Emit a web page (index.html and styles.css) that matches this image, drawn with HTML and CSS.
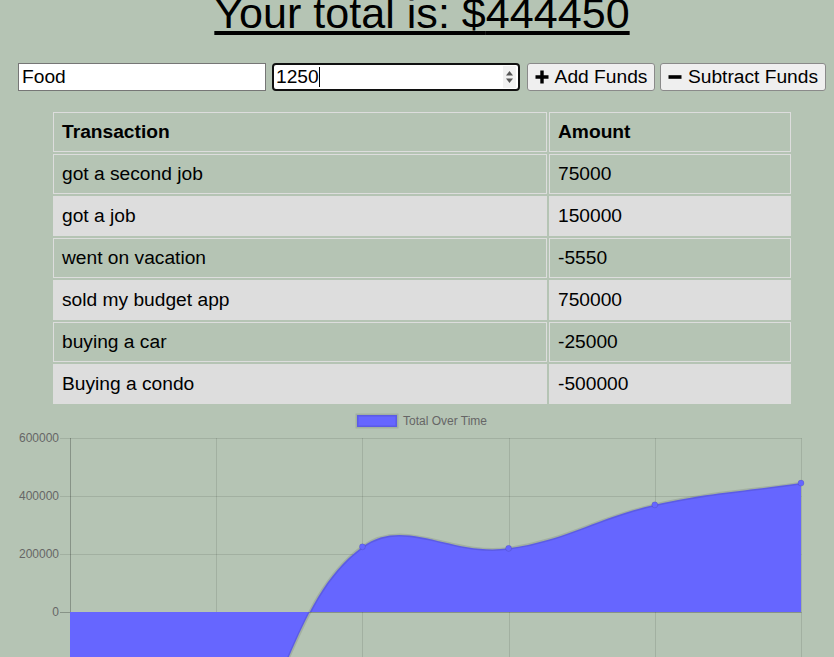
FILE: index.html
```html
<!DOCTYPE html>
<html lang="en">
<head>
<meta charset="utf-8">
<title>Budget Tracker</title>
<link rel="stylesheet" href="styles.css">
</head>
<body>
<main class="page">
  <h1 class="total">Your total is: $<span class="total-amount">444450</span></h1>

  <div class="form">
    <input class="name-input" type="text" value="Food" placeholder="Name of transaction">
    <div class="amount-box">
      <input class="amount-input" type="number" value="1250" placeholder="Transaction amount">
      <span class="caret"></span>
      <span class="spinner">
        <svg width="9" height="16" viewBox="0 0 9 16"><path d="M4.5 2 L8 6.5 H1 Z" fill="#555"/><path d="M4.5 14 L8 9.5 H1 Z" fill="#555"/></svg>
      </span>
    </div>
    <button class="btn btn-add" type="button">
      <svg class="icon" width="14" height="14" viewBox="0 0 14 14"><path d="M7 0.5 V13.5 M0.5 7 H13.5" stroke="#000" stroke-width="3.4" fill="none"/></svg>
      <span>Add Funds</span>
    </button>
    <button class="btn btn-sub" type="button">
      <svg class="icon" width="14" height="14" viewBox="0 0 14 14"><path d="M0.5 7 H13.5" stroke="#000" stroke-width="3.6" fill="none"/></svg>
      <span>Subtract Funds</span>
    </button>
  </div>

  <table class="transactions">
    <thead>
      <tr><th class="col-name">Transaction</th><th>Amount</th></tr>
    </thead>
    <tbody>
      <tr><td>got a second job</td><td>75000</td></tr>
      <tr><td>got a job</td><td>150000</td></tr>
      <tr><td>went on vacation</td><td>-5550</td></tr>
      <tr><td>sold my budget app</td><td>750000</td></tr>
      <tr><td>buying a car</td><td>-25000</td></tr>
      <tr><td>Buying a condo</td><td>-500000</td></tr>
    </tbody>
  </table>
</main>

<svg class="chart" width="834" height="251" viewBox="0 406 834 251">
  <g class="grid" stroke="rgba(0,0,0,0.1)" stroke-width="1">
    <line x1="60" y1="438.5" x2="801.5" y2="438.5"/>
    <line x1="60" y1="496.5" x2="801.5" y2="496.5"/>
    <line x1="60" y1="554.5" x2="801.5" y2="554.5"/>
    <line x1="216.5" y1="438" x2="216.5" y2="700"/>
    <line x1="362.5" y1="438" x2="362.5" y2="700"/>
    <line x1="509.5" y1="438" x2="509.5" y2="700"/>
    <line x1="655.5" y1="438" x2="655.5" y2="700"/>
    <line x1="801.5" y1="438" x2="801.5" y2="700"/>
  </g>
  <g stroke="rgba(0,0,0,0.25)" stroke-width="1">
    <line x1="60" y1="612.5" x2="801.5" y2="612.5"/>
    <line x1="70.5" y1="438" x2="70.5" y2="700"/>
  </g>
  <g class="ticks" font-family="'Liberation Sans', Arial, sans-serif" font-size="12" fill="#666" text-anchor="end">
    <text x="59" y="442.3">600000</text>
    <text x="59" y="500.3">400000</text>
    <text x="59" y="558.3">200000</text>
    <text x="59" y="616.3">0</text>
  </g>
  <path d="M70,757 C128.48,759.9 174.27,786 216.2,764.25 C291.23,710.3 287.31,602.19 362.4,546.75 C404.27,515.83 451.35,556.56 508.6,548.36 C568.31,539.81 595.41,518.11 654.8,504.86 C712.37,492.01 742.52,491.81 801,483.11 L801,612 L70,612 Z" fill="#6666ff"/>
  <path d="M70,757 C128.48,759.9 174.27,786 216.2,764.25 C291.23,710.3 287.31,602.19 362.4,546.75 C404.27,515.83 451.35,556.56 508.6,548.36 C568.31,539.81 595.41,518.11 654.8,504.86 C712.37,492.01 742.52,491.81 801,483.11" fill="none" stroke="rgba(0,0,0,0.1)" stroke-width="3"/>
  <g fill="#6666ff" stroke="rgba(0,0,0,0.1)" stroke-width="1">
    <circle cx="362.4" cy="546.75" r="3"/>
    <circle cx="508.6" cy="548.36" r="3"/>
    <circle cx="654.8" cy="504.86" r="3"/>
    <circle cx="801" cy="483.11" r="3"/>
  </g>
  <rect x="357" y="415" width="40" height="12" fill="#6666ff" stroke="rgba(0,0,0,0.1)" stroke-width="3"/>
  <text x="403" y="425.3" font-family="'Liberation Sans', Arial, sans-serif" font-size="12" fill="#666">Total Over Time</text>
</svg>
</body>
</html>
```

FILE: styles.css
```css
html {
  background: #b5c4b4;
}

body {
  margin: 0;
  overflow: hidden;
  background: #b5c4b4;
  color: #000;
  font-family: "Liberation Sans", Arial, Helvetica, sans-serif;
  font-size: 19.2px;
}

.page {
  padding-left: 10px;
}

.total {
  margin: 0;
  font-size: 43.1px;
  font-weight: 400;
  line-height: 27px;
  text-align: center;
  text-decoration: underline;
}

.form {
  display: flex;
  align-items: stretch;
  height: 28px;
  margin: 36px 0 0 8px;
}

.name-input {
  box-sizing: border-box;
  width: 248px;
  height: 28px;
  margin: 0;
  padding: 0 3px;
  border: 1px solid #767676;
  border-radius: 0;
  background: #fff;
  font: inherit;
  color: #000;
}

.amount-box {
  position: relative;
  box-sizing: border-box;
  display: flex;
  align-items: center;
  width: 248px;
  height: 28px;
  margin-left: 6px;
  border: 2px solid #101010;
  border-radius: 4px;
  background: #fff;
}

.amount-input {
  flex: 1;
  min-width: 0;
  height: 100%;
  margin: 0;
  padding: 0 0 0 2px;
  border: 0;
  outline: none;
  background: transparent;
  font: inherit;
  color: #000;
  -moz-appearance: textfield;
}

.amount-input::-webkit-inner-spin-button,
.amount-input::-webkit-outer-spin-button {
  -webkit-appearance: none;
  margin: 0;
}

.caret {
  position: absolute;
  left: 45px;
  top: 2px;
  width: 1px;
  height: 20px;
  background: #000;
}

.spinner {
  display: flex;
  align-items: center;
  justify-content: center;
  width: 13px;
  height: 22px;
  margin-right: 2px;
  background: #f1f1f1;
}

.btn {
  box-sizing: border-box;
  display: flex;
  align-items: center;
  justify-content: center;
  gap: 6px;
  height: 28px;
  margin: 0;
  padding: 0 6px;
  border: 1px solid #8a8a8a;
  border-radius: 3px;
  background: #efefef;
  color: #000;
  font: inherit;
}

.btn-add {
  width: 128px;
  margin-left: 7px;
}

.btn-sub {
  width: 166px;
  margin-left: 5px;
}

.icon {
  display: block;
  flex: none;
}

.transactions {
  table-layout: fixed;
  width: 742px;
  margin: 19px auto 0;
  border-spacing: 2px;
  font-size: 19.2px;
  color: #000;
}

.transactions th,
.transactions td {
  padding: 8px;
  border: 1px solid #dddddd;
  text-align: left;
  line-height: 22px;
}

.transactions th {
  font-weight: 700;
}

.transactions .col-name {
  width: 476px;
}

.transactions tbody tr:nth-child(even) {
  background: #dddddd;
}

.chart {
  display: block;
}
```
